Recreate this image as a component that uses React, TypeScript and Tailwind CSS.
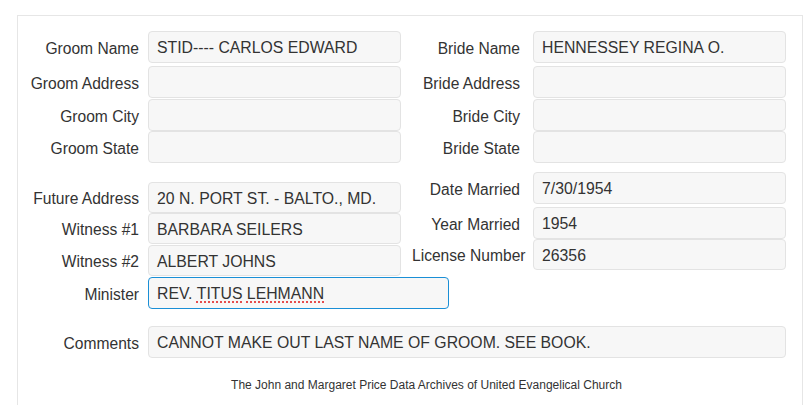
import React from "react";

type RowProps = {
  label: string;
  children?: React.ReactNode;
  rowCls: string;
  labelCls: string;
  inputCls: string;
  focus?: boolean;
};

function Row({ label, children, rowCls, labelCls, inputCls, focus }: RowProps) {
  return (
    <div className={`flex items-center ${rowCls}`}>
      <div className={`shrink-0 text-right whitespace-nowrap pt-[3px] ${labelCls}`}>{label}</div>
      <div
        className={`${inputCls} shrink-0 h-full flex items-center pl-[8px] pt-[2px] rounded-[4px] border bg-[#f7f7f7] whitespace-nowrap text-[15.8px] ${
          focus ? "border-[#1a8fd6]" : "border-[#e3e3e3]"
        }`}
      >
        {children}
      </div>
    </div>
  );
}

const L = "w-[121px] mr-[9px]";
const R = "w-[108px] mr-[13px]";
const W = "w-[253px]";

export default function App() {
  return (
    <div
      className="bg-white w-[805px] h-[405px] overflow-hidden text-[#333333] text-[15.6px]"
      style={{ fontFamily: '"Liberation Sans", Arial, sans-serif' }}
    >
      <div className="ml-[17px] mt-[15px] w-[786px] h-[420px] border border-[#e6e6e6] pt-[15px]">
        <div className="flex items-start">
          <div className="flex flex-col w-[383px] shrink-0">
            <Row label="Groom Name" rowCls="h-[32px]" labelCls={L} inputCls={W}>
              STID---- CARLOS EDWARD
            </Row>
            <Row label="Groom Address" rowCls="h-[32px] mt-[3px]" labelCls={L} inputCls={W} />
            <Row label="Groom City" rowCls="h-[32px] mt-[1px]" labelCls={L} inputCls={W} />
            <Row label="Groom State" rowCls="h-[32px] mt-[0px]" labelCls={L} inputCls={W} />
          </div>
          <div className="flex flex-col ml-[11px]">
            <Row label="Bride Name" rowCls="h-[32px]" labelCls={R} inputCls={W}>
              HENNESSEY REGINA O.
            </Row>
            <Row label="Bride Address" rowCls="h-[32px] mt-[3px]" labelCls={R} inputCls={W} />
            <Row label="Bride City" rowCls="h-[32px] mt-[1px]" labelCls={R} inputCls={W} />
            <Row label="Bride State" rowCls="h-[32px] mt-[0px]" labelCls={R} inputCls={W} />
          </div>
        </div>

        <div className="flex items-start mt-[9px]">
          <div className="flex flex-col pt-[10px] w-[383px] shrink-0">
            <Row label="Future Address" rowCls="h-[31px]" labelCls={L} inputCls={W}>
              20 N. PORT ST. - BALTO., MD.
            </Row>
            <Row label="Witness #1" rowCls="h-[31px] mt-[0px]" labelCls={L} inputCls={W}>
              BARBARA SEILERS
            </Row>
            <Row label="Witness #2" rowCls="h-[31px] mt-[1px]" labelCls={L} inputCls={W}>
              ALBERT JOHNS
            </Row>
            <Row label="Minister" rowCls="h-[32px] mt-[1px]" labelCls={L} inputCls="w-[301px]" focus>
              REV.&nbsp;
              <span className="underline decoration-dotted decoration-[#e02020] underline-offset-[3px]">TITUS</span>
              &nbsp;
              <span className="underline decoration-dotted decoration-[#e02020] underline-offset-[3px]">LEHMANN</span>
            </Row>
          </div>
          <div className="flex flex-col ml-[11px]">
            <Row label="Date Married" rowCls="h-[32px]" labelCls={R} inputCls={W}>
              7/30/1954
            </Row>
            <Row label="Year Married" rowCls="h-[32px] mt-[3px]" labelCls={R} inputCls={W}>
              1954
            </Row>
            <Row label="License Number" rowCls="h-[31px] mt-[0px]" labelCls={R} inputCls={W}>
              26356
            </Row>
          </div>
        </div>

        <Row label="Comments" rowCls="h-[32px] mt-[17px]" labelCls={L} inputCls="w-[638px]">
          CANNOT MAKE OUT LAST NAME OF GROOM. SEE BOOK.
        </Row>

        <div className="mt-[20px] pl-[33px] text-center text-[12px] leading-[14px] text-[#333333]">
          The John and Margaret Price Data Archives of United Evangelical Church
        </div>
      </div>
    </div>
  );
}
